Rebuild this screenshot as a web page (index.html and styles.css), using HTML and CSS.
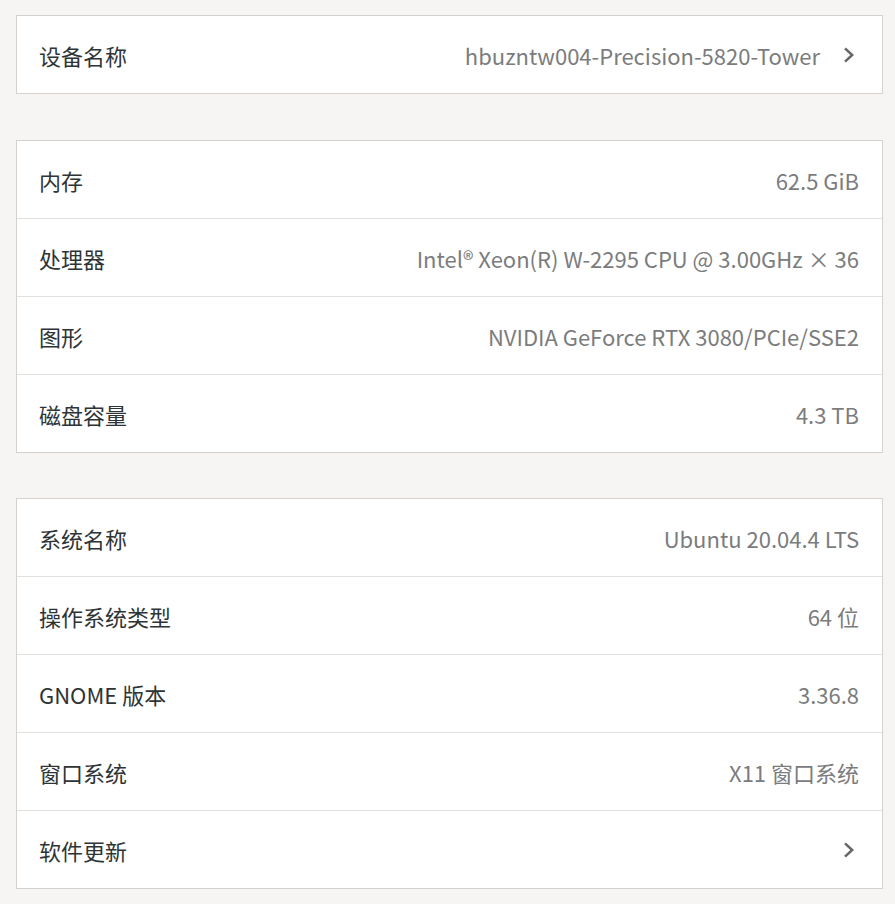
FILE: index.html
```html
<!DOCTYPE html>
<html lang="zh-CN">
<head>
<meta charset="utf-8">
<link rel="stylesheet" href="styles.css">
</head>
<body>
<main class="page">
  <section class="card card-top">
    <div class="row">
      <span class="label">设备名称</span>
      <span class="value">hbuzntw004-Precision-5820-Tower</span>
      <svg class="chev" viewBox="0 0 14 16" width="14" height="16"><path d="M3 1.3 L10.2 8 L3 14.7" fill="none" stroke="#666666" stroke-width="2.5"/></svg>
    </div>
  </section>
  <section class="card">
    <div class="row"><span class="label">内存</span><span class="value">62.5 GiB</span></div>
    <div class="row"><span class="label">处理器</span><span class="value">Intel® Xeon(R) W-2295 CPU @ 3.00GHz × 36</span></div>
    <div class="row"><span class="label">图形</span><span class="value">NVIDIA GeForce RTX 3080/PCIe/SSE2</span></div>
    <div class="row"><span class="label">磁盘容量</span><span class="value">4.3 TB</span></div>
  </section>
  <section class="card">
    <div class="row"><span class="label">系统名称</span><span class="value">Ubuntu 20.04.4 LTS</span></div>
    <div class="row"><span class="label">操作系统类型</span><span class="value">64 位</span></div>
    <div class="row"><span class="label">GNOME 版本</span><span class="value">3.36.8</span></div>
    <div class="row"><span class="label">窗口系统</span><span class="value">X11 窗口系统</span></div>
    <div class="row">
      <span class="label">软件更新</span>
      <span class="value"></span>
      <svg class="chev" viewBox="0 0 14 16" width="14" height="16"><path d="M3 1.3 L10.2 8 L3 14.7" fill="none" stroke="#666666" stroke-width="2.5"/></svg>
    </div>
  </section>
</main>
</body>
</html>
```
FILE: styles.css
```css
html, body {
  margin: 0;
  padding: 0;
  background: #f6f5f4;
}
body {
  font-family: "Noto Sans CJK SC", "Noto Sans", sans-serif;
  font-size: 22px;
  color: #2e3436;
}
.page {
  display: flex;
  flex-direction: column;
  gap: 45px;
  padding: 15px 12px 16px 16px;
}
.card {
  background: #ffffff;
  border: 1px solid #d6d1cd;
}
.card-top {
  margin-bottom: 1px;
}
.row {
  height: 77px;
  display: flex;
  align-items: center;
  padding: 0 23px 0 22px;
}
.row + .row {
  border-top: 1px solid #e3e0dd;
}
.label {
  flex: 0 0 auto;
  color: #2e3436;
}
.value {
  flex: 1 1 auto;
  text-align: right;
  color: #7b7c7d;
}
.chev {
  flex: 0 0 auto;
  margin-left: 22px;
  margin-right: 3px;
}
```
